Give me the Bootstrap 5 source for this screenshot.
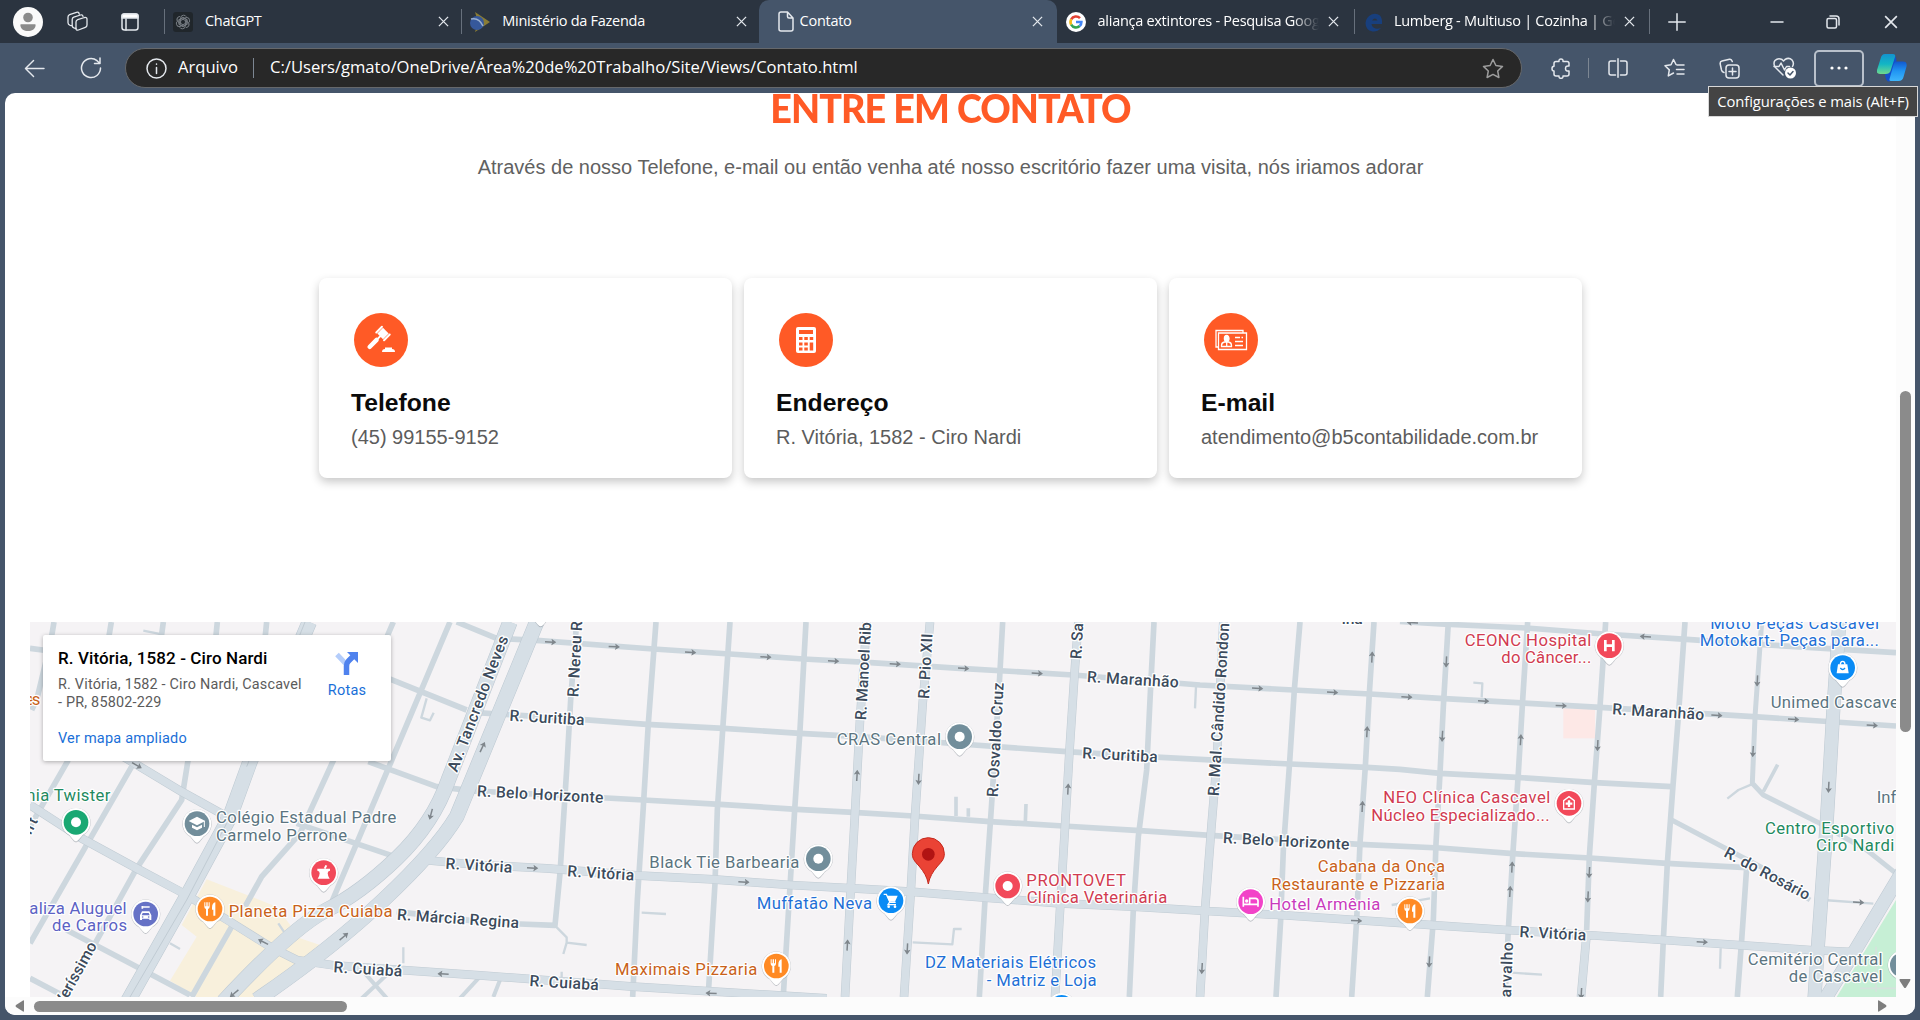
<!DOCTYPE html>
<html lang="pt-BR">
<head>
<meta charset="utf-8">
<title>Contato</title>
<link href="https://cdn.jsdelivr.net/npm/bootstrap@5.3.0/dist/css/bootstrap.min.css" rel="stylesheet">
<style>
body{width:1920px;height:1020px;overflow:hidden;background:#45556a;font-family:"Open Sans",sans-serif;color:#fff}
svg{display:block;flex:none}
.ico{fill:none;stroke:#e4e8ed;stroke-width:1.5;stroke-linecap:round;stroke-linejoin:round}
.tabstrip{height:43px;background:#2b3440;font-size:14.5px;letter-spacing:-.28px}
.lead-slot{width:164px;padding-left:13px}
.btab{width:297.3px;padding:0 12px 0 8px;border-left:1px solid transparent}
.btab.split::before{content:"";width:1px;height:25px;background:#67707c;margin-left:-9px;margin-right:8px}
.btab.on{background:#45556a;border-radius:10px 10px 0 0;width:298px;padding-left:18px}
.tab-title{white-space:nowrap;overflow:hidden;padding-bottom:2px}
.faded{-webkit-mask-image:linear-gradient(90deg,#000 88%,transparent);mask-image:linear-gradient(90deg,#000 88%,transparent)}
.tools{height:50px}
.slot{display:flex;align-items:center;justify-content:center;flex:none;height:100%}
.omni{width:1397px;height:40px;background:#282828;border:1px solid #66686b;border-radius:20px;padding:0 17px 0 20px;font-size:16.6px}
.omni span{padding-bottom:1px}
.vbar{width:1px;height:20px;background:#7d8793;flex:none}
.menu-btn{width:50px;height:37px;border:2px solid #b9c1cb;border-radius:5px}
.tip{top:86px;right:2px;width:210px;height:31px;background:#444;border:1px solid #d8d8d8;font-size:14.8px;letter-spacing:-.11px;z-index:5;line-height:29px}
.viewport{margin-left:5px;width:1910px;height:922px;background:#fff;border-radius:10px;overflow:hidden}
.page{width:1891px;height:904px;font-family:"Liberation Sans",Arial,sans-serif}
.headline{color:#ff5a26;font-family:Lato,sans-serif;font-weight:900;font-size:40px;line-height:30px;letter-spacing:-1px;transform:scaleX(.942)}
.intro{font-size:20px;color:#616161;line-height:30px;margin-top:29px}
.cards{gap:12px;margin-top:96px}
.info{width:413px;height:200px;border-radius:8px;border:0;box-shadow:0 4px 10px rgba(0,0,0,.22);padding:35px 32px}
.info h2{font-size:24.7px;font-weight:700;color:#0b0b0b;line-height:29px;margin:21px 0 0}
.info p{font-size:20px;color:#5c5c5c;line-height:30px;margin:5px 0 0;white-space:nowrap}
.mapbox{margin:144px 0 0 25px;width:1866px;height:375px;font-family:Roboto,sans-serif}
.place{left:13px;top:13px;width:348px;height:126px;background:#fff;border-radius:2px;box-shadow:0 1px 4px rgba(0,0,0,.3);padding:13px 14px 0 15px}
.place h3{font-size:17px;font-weight:500;color:#000;line-height:20px;margin:0;letter-spacing:.1px}
.place .addr{font-size:14.4px;line-height:18px;color:#5b5b5b;margin:8px 0 0;white-space:nowrap;letter-spacing:.2px}
.place a{font-size:14.5px;color:#1a6fd8;text-decoration:none;letter-spacing:.2px}
.go{width:60px;padding-top:2px}
.vtrack{width:19px;height:904px;background:#fcfcfc}
.vthumb{width:11px;height:341px;border-radius:6px;background:#8b8b8b;margin:298px 0 0 4px}
.htrack{height:18px;background:#fcfcfc}
.hthumb{width:313px;height:11px;border-radius:6px;background:#8b8b8b;margin-left:9px}
.st{fill:none;stroke:#cdd7de;stroke-width:17;stroke-linejoin:round}
.mj{fill:none;stroke:#d6dfe6;stroke-width:23;stroke-linejoin:round}
.mjb{fill:none;stroke:#c0cbd3;stroke-width:26;stroke-linejoin:round}
.lbl text{font-family:Roboto,sans-serif;font-size:50px;paint-order:stroke;stroke:#fff;stroke-width:7px;stroke-linejoin:round}
.rd text{font-weight:500;font-size:47px;fill:#3c4b5c;stroke-width:8px}
.gn{fill:#1f8a5f}.gy{fill:#5b7480}.pu{fill:#5c62c4}.og{fill:#c9621a}.bl{fill:#1f70d6}.re{fill:#d13b50}.mg{fill:#c93bbd}
</style>
<script src="https://cdn.jsdelivr.net/npm/bootstrap@5.3.0/dist/js/bootstrap.bundle.min.js"></script>
</head>
<body class="position-relative">
<svg width="0" height="0" class="position-absolute">
  <symbol id="x" viewBox="0 0 12 12"><path d="M1 1l10 10M11 1L1 11" stroke="#e4e8ed" stroke-width="1.4"/></symbol>
  <symbol id="pin" viewBox="-50 -50 100 120" overflow="visible"><path d="M0 60C-6 60-12 50-20 40A44 44 0 1 1 20 40C12 50 6 60 0 60z" fill="#8a9299" opacity=".5"/><path d="M0 57C-6 57-12 47-20 38A43 43 0 1 1 20 38C12 47 6 57 0 57z" fill="#fff"/></symbol>
  <symbol id="ar" viewBox="-18 -10 36 20"><path d="M-16 0H8" stroke="#7f868c" stroke-width="4.500"/><path d="M3-10L18 0L3 10L6 0z" fill="#7f868c"/></symbol>
</svg>

<header>
  <div class="tabstrip d-flex align-items-center">
    <div class="lead-slot d-flex align-items-center flex-shrink-0">
      <svg width="30" height="30" viewBox="0 0 30 30"><circle cx="15" cy="15" r="15" fill="#fafafa"/><circle cx="15" cy="10.500" r="4.800" fill="#8b8b8b"/><path d="M8 17.200h14q.8 0 .6 1.300C22 22.500 19 24 15 24s-7-1.500-7.600-5.500q-.2-1.300.6-1.300z" fill="#8b8b8b"/></svg>
      <svg class="ico" style="margin-left:24px;stroke-width:1.3" width="21" height="21" viewBox="0 0 21 21"><path d="M9 11q0-1.800 1.700-2.400L17.600 6.500Q20 6 20 8.300V14q0 1.800-1.700 2.400L11.400 19Q9 19.800 9 17.500z"/><path d="M9 17.500l-2.200-.6Q5.200 16.300 5.200 14.500V8.500Q5.200 6.800 6.800 6.200L13.500 4Q15.600 3.300 16 5.500M5.200 14.800l-2-.5Q1 13.600 1 11.800V6Q1 4.200 2.600 3.600L9.500 1.300Q11.800.6 12.200 3"/></svg>
      <svg class="ico" style="margin-left:33px" width="18" height="18" viewBox="0 0 18 18"><rect x="1" y="1" width="16" height="16" rx="2.500"/><path d="M1 3q0-2 2-2h12q2 0 2 2v2H1z" fill="#fff"/><path d="M5 6v11"/></svg>
    </div>
    <div class="btab split d-flex align-items-center flex-shrink-0 h-100">
      <svg width="20" height="20" viewBox="0 0 20 20"><rect width="20" height="20" rx="3" fill="#20262b"/><g fill="none" stroke="#767c82" stroke-width="1"><path id="petal" d="M7.600 11.500V6.200Q7.800 3.200 10.600 3.200 12.600 3.300 13.300 4.700M9.800 5.300L13.900 7.700V12"/><use href="#petal" transform="rotate(60 10 10)"/><use href="#petal" transform="rotate(120 10 10)"/><use href="#petal" transform="rotate(180 10 10)"/><use href="#petal" transform="rotate(240 10 10)"/><use href="#petal" transform="rotate(300 10 10)"/></g></svg>
      <span class="tab-title flex-grow-1 ms-2 ps-1">ChatGPT</span><svg width="11" height="11"><use href="#x"/></svg>
    </div>
    <div class="btab split d-flex align-items-center flex-shrink-0 h-100">
      <svg width="20" height="20" viewBox="0 0 20 20"><path d="M5 0l15 10L5 20l3-10z" fill="#8a7c35"/><circle cx="7" cy="11" r="7" fill="#36589b"/><path d="M1 7q8-2 12 7" stroke="#9bb0cf" stroke-width="1.500" fill="none"/></svg>
      <span class="tab-title flex-grow-1 ms-2 ps-1">Ministério da Fazenda</span><svg width="11" height="11"><use href="#x"/></svg>
    </div>
    <div class="btab on d-flex align-items-center flex-shrink-0 h-100">
      <svg class="ico" width="16" height="21" viewBox="0 0 16 21"><path d="M3 1h6.500l5.500 6v11q0 2-2 2H3q-2 0-2-2V3q0-2 2-2zM9.500 1v4.500q0 1.500 1.500 1.500h4"/></svg>
      <span class="tab-title flex-grow-1" style="margin-left:6px">Contato</span><svg width="11" height="11" style="margin-right:2px"><use href="#x"/></svg>
    </div>
    <div class="btab d-flex align-items-center flex-shrink-0 h-100">
      <svg width="20" height="20" viewBox="0 0 20 20"><circle cx="10" cy="10" r="10" fill="#fff"/><g fill="none" stroke-width="2.600"><path d="M14 6.200A5.500 5.500 0 0 0 5.200 7.300" stroke="#e24234"/><path d="M5.200 7.300a5.500 5.500 0 0 0 0 5.400" stroke="#f5b916"/><path d="M5.200 12.700a5.500 5.500 0 0 0 8.500 1.300" stroke="#31a552"/><path d="M13.700 14A5.500 5.500 0 0 0 15.400 10H10" stroke="#4285f4"/></g></svg>
      <span class="tab-title faded" style="margin-left:12px;width:221px">aliança extintores - Pesquisa Google</span><svg class="ms-auto" width="11" height="11" style="margin-right:3px"><use href="#x"/></svg>
    </div>
    <div class="btab split d-flex align-items-center flex-shrink-0 h-100">
      <svg width="20" height="20" viewBox="0 0 20 20"><path d="M17 3.500Q13 .5 8.500 2.500 3 5 2.500 11q0 7 7 8.500 5 .5 8.500-3.500-3 1-5.500.5Q9 15.500 8.500 12H19Q19.500 6.500 17 3.500z" fill="#183f7d"/><path d="M9 8.500q3-4 5.500 0z" fill="#2b3440"/></svg>
      <span class="tab-title faded" style="margin-left:11px;width:221px">Lumberg - Multiuso | Cozinha | Geral</span><svg class="ms-auto" width="11" height="11" style="margin-right:4px"><use href="#x"/></svg>
    </div>
    <span class="vbar" style="height:25px;background:#67707c;margin-left:-2px"></span>
    <div class="slot" style="width:54px"><svg class="ico" width="18" height="18" viewBox="0 0 18 18"><path d="M9 .8v16.400M.8 9h16.400"/></svg></div>
    <div class="slot ms-auto" style="width:56px"><svg class="ico" width="14" height="14" viewBox="0 0 14 14"><path d="M1 7h12"/></svg></div>
    <div class="slot" style="width:56px"><svg class="ico" width="14" height="14" viewBox="0 0 14 14"><rect x="1" y="3.500" width="9.500" height="9.500" rx="1.500"/><path d="M4 1h6q3 0 3 3v6"/></svg></div>
    <div class="slot" style="width:59px"><svg width="14" height="14"><use href="#x"/></svg></div>
  </div>

  <div class="tools d-flex align-items-center">
    <div class="slot" style="width:69px"><svg class="ico" width="21" height="19" viewBox="0 0 22 20"><path d="M21 10H1.500M10 1.500L1.500 10l8.500 8.500"/></svg></div>
    <div class="slot" style="width:43px"><svg class="ico" width="22" height="22" viewBox="0 0 22 22"><path d="M20.500 11A9.500 9.500 0 1 1 17 3.700L20 6.500M20 1v5.500h-5.500"/></svg></div>
    <div class="omni d-flex align-items-center flex-shrink-0" style="margin-left:13px">
      <svg class="ico" width="21" height="21" viewBox="0 0 21 21"><circle cx="10.500" cy="10.500" r="9.500"/><path d="M10.500 9.500v6M10.500 6v.3"/></svg>
      <span style="margin-left:11px;width:75px">Arquivo</span><span class="vbar"></span>
      <span class="flex-grow-1" style="margin-left:16px">C:/Users/gmato/OneDrive/Área%20de%20Trabalho/Site/Views/Contato.html</span>
      <svg class="ico" style="stroke:#9c9c9c" width="22" height="21" viewBox="0 0 22 21"><path d="M11 1.500l2.900 6 6.600.9-4.800 4.600 1.200 6.500-5.900-3.100-5.900 3.100 1.200-6.500L1.500 8.400l6.600-.9z"/></svg>
    </div>
    <div class="slot" style="width:56px;margin-left:10px"><svg class="ico" width="19" height="21" viewBox="0 0 19 21"><path d="M5 3.500h3q-.3-2.500 2-2.500t2 2.500h4q2 0 2 2V8q-3.500-.5-3.500 2.500t3.500 2.500v3q0 2-2 2h-4q.2 2.300-2 2.300T8 18H5q-2 0-2-2v-3Q1 13 1 10.700T3 8.300V5.500q0-2 2-2z"/></svg></div>
    <span class="vbar"></span>
    <div class="slot" style="width:58px"><svg class="ico" width="20" height="20" viewBox="0 0 20 20"><path d="M7.500 3H3Q1 3 1 5v10q0 2 2 2h4.500M12.500 3H17q2 0 2 2v10q0 2-2 2h-4.500M10 .8v18.400"/></svg></div>
    <div class="slot" style="width:55px"><svg class="ico" width="21" height="20" viewBox="0 0 21 20"><path d="M12 6.500L9.500 1.500 7 6.800l-6 .9 4.300 4.200-1 6L9.500 15M13 7h7M12.500 11.500H20M13 16h7"/></svg></div>
    <div class="slot" style="width:54px"><svg class="ico" width="21" height="21" viewBox="0 0 21 21"><rect x="7" y="7" width="13" height="13" rx="3"/><path d="M13.500 10v7M10 13.500h7M5 14.500q-2-.5-2.500-2.500L1.200 6Q.8 3.500 3 3l7.500-1.800q2-.4 2.800 2.300"/></svg></div>
    <div class="slot" style="width:58px"><svg class="ico" width="24" height="22" viewBox="0 0 24 22"><path d="M10 18L2 10Q0 6 2 3.500 5 .5 9 2.500l1.500 1.500L12 2.500Q16 0 19 3q2.500 3 .5 6.500"/><path d="M1 9.500h5L8 6l3.500 7 2-3.500h3"/><circle cx="17.500" cy="16" r="5.500" fill="#fff" stroke="none"/><path d="M15 16l2 2 3-3.500" stroke="#45556a"/></svg></div>
    <div class="slot menu-btn"><svg width="18" height="4" viewBox="0 0 18 4" fill="#fff"><circle cx="2" cy="2" r="1.600"/><circle cx="9" cy="2" r="1.600"/><circle cx="16" cy="2" r="1.600"/></svg></div>
    <div class="slot" style="width:56px"><svg width="30" height="28" viewBox="0 0 30 28"><defs><linearGradient id="c1" x2="0" y2="1"><stop stop-color="#1393cf"/><stop offset=".5" stop-color="#12b6c4"/><stop offset="1" stop-color="#6fd98d"/></linearGradient><linearGradient id="c2" x2="0" y2="1"><stop stop-color="#1158cf"/><stop offset=".5" stop-color="#2196f3"/><stop offset="1" stop-color="#3fb6fb"/></linearGradient></defs><path d="M16 1q3 0 3.500 6L15 24q-1 4-3.500 3.500T8 21L13 7q1-6 3-6z" fill="#1450cb"/><path d="M8 0h8q3 0 2 3l-4.500 14q-1 3-5 3H3q-4 0-3-4L3.500 5Q4.500 0 8 0z" fill="url(#c1)"/><path d="M20 7.500h6q4.500 0 3.500 5l-3 10.500q-1 4-5 4h-7.500q-2 0-1.500-2l4-14q1-3.500 3.500-3.500z" fill="url(#c2)"/></svg></div>
  </div>
</header>
<div class="tip position-absolute text-center text-nowrap">Configurações e mais (Alt+F)</div>

<main class="viewport">
  <div class="d-flex">
    <div class="page">
      <h1 class="headline text-center mb-0">ENTRE EM CONTATO</h1>
      <p class="intro text-center mb-0">Através de nosso Telefone, e-mail ou então venha até nosso escritório fazer uma visita, nós iriamos adorar</p>
      <div class="cards d-flex justify-content-center">
        <div class="card info">
          <svg width="60" height="54" viewBox="-30 -27 60 54"><circle r="27" fill="#ff5a26"/><g fill="#fff"><g transform="translate(2,-6.500) rotate(45)"><rect x="-4" y="-4" width="8" height="8"/><rect x="-6.500" y="-5" width="2" height="10" rx="1"/><rect x="4.500" y="-5" width="2" height="10" rx="1"/><rect x="-1" y="3" width="2" height="5"/><rect x="-2.200" y="7" width="4.400" height="14" rx="2"/></g><path d="M1 12q0-3 3-3V7.500h7V9q3 0 3 3z"/></g></svg>
          <h2>Telefone</h2><p>(45) 99155-9152</p>
        </div>
        <div class="card info">
          <svg width="60" height="54" viewBox="-30 -27 60 54"><circle r="27" fill="#ff5a26"/><rect x="-10" y="-13" width="20" height="26" rx="2" fill="#fff"/><g fill="#ff5a26"><path d="M-7-10H7v4H-7zM-7-3h3.500v3H-7zM-1.700-3h3.500v3h-3.500zM3.700-3h3.500v3H3.700zM-7 2.500h3.500v3H-7zM-1.700 2.500h3.500v3h-3.500zM3.700 2.500h3.500v8H3.700zM-7 7.500h3.500v3H-7zM-1.700 7.500h3.500v3h-3.500z"/></g></svg>
          <h2>Endereço</h2><p>R. Vitória, 1582 - Ciro Nardi</p>
        </div>
        <div class="card info">
          <svg width="60" height="54" viewBox="-30 -27 60 54"><circle r="27" fill="#ff5a26"/><g fill="none" stroke="#fff" stroke-width="1.300"><path d="M-12.500 7H-15V-9.500h27V-7M-12.500-7h28V9.500h-28zM4-2.500h5M10.500-2.500h1.500M4 1.500h8M4 5.500h8M-9.500 6.500v-1q0-3 3-3.500h4q3 .5 3 3.500v1z"/><ellipse cx="-4.300" cy="-1.600" rx="2.300" ry="3" fill="#fff"/><path d="M-4.300 2v4"/></g></svg>
          <h2>E-mail</h2><p>atendimento@b5contabilidade.com.br</p>
        </div>
      </div>

      <section class="mapbox position-relative">
        <svg width="1866" height="375" viewBox="90 36 5598 1125">
          <rect x="90" y="36" width="5598" height="1125" fill="#f5f3f5"/>
          <path d="M620 808L830 890L900 985L960 1005L1000 1000L760 1161H590L510 1112L590 980L545 945z" fill="#f8f0dc"/>
          <path d="M5688 870L5510 1161H5688z" fill="#c6efd5"/>
          <path d="M5580 1135h108M5628 1010v135" stroke="#d5e2dd" stroke-width="5"/>
          <rect x="4690" y="295" width="95" height="90" fill="#fde8e6"/>
          <g class="st">
            <path d="M162 36l-10 60L110 270L95 300M90 115l60 8M334 36l-10 60M490 36l-8 60M652 36l-6 60M800 36l-6 60M1180 36l-30 70M90 650L205 450M395 470L90 1000M565 445L545 570L410 775L280 1010L180 1170M1003 445L900 670L785 800L735 890M1350 36L1165 475L1070 700L985 900M1105 455L1310 530L1440 545M1165 205L1400 300M890 640L1200 745M200 960L410 1070L570 1155M90 1105L180 1152M695 950L575 1161"/>
            <path d="M1370 36L1490 85L1620 92L1960 117L2190 132L2410 147L2600 157L2880 175L3220 195L3600 225L3880 240L4110 252L4320 265L4800 292L5260 320L5688 348"/>
            <path d="M1430 308L1700 325L1940 343L2170 355L2400 370L2580 380L2880 402L3200 425L3440 440L3870 462L4100 472L4200 478L4320 490L4550 502L4785 518L5015 530"/>
            <path d="M1430 543L1930 570L2160 583L2390 598L2560 607L2740 618L2970 635L3190 648L3420 662L3630 676L4080 703L4320 714L4540 731L4770 744L5000 760L5240 773L5225 990L5212 1161"/>
            <path d="M4200 34L4320 42L4580 54L4810 72L5060 88L5290 104L5688 128"/>
            <path d="M1190 905L1440 935L1560 942L1665 946L1680 790L1700 480L1712 270L1730 36"/>
            <path d="M1968 36L1945 340L1930 590L1912 870L1898 1161M2190 36L2168 360L2152 600L2145 820L2125 1150M2418 36L2400 360L2384 600L2370 830L2350 1155M3008 36L2998 220L2975 580L2955 870L2938 1161M3462 36L3450 270L3440 480L3415 680L3400 900L3388 1161M3900 36L3883 240L3868 470L3850 720L3842 930L3828 1161M4122 36L4108 250L4096 470L4080 700L4070 930L4055 1161M4345 36L4330 290L4320 490L4308 700L4300 930L4282 1161M4583 36L4568 270L4555 490L4538 740L4525 960L4515 1161M4817 36L4800 290L4783 520L4768 740L4760 960M5055 36L5035 320L5018 540L5002 760L4990 990L4982 1161"/>
            <path style="stroke-width:15" d="M5285 36L5265 320L5257 520L5290 555L5450 635L5600 720L5688 790M5015 630L5300 780L5430 870"/>
            <path style="stroke-width:12" d="M1500 1110L1480 1161M1095 1090L1165 1170M1165 1090L1080 1170M1440 1100L1380 1165"/>
          </g>
          <g class="st">
            <path style="stroke-width:7" d="M430 62L490 74M1280 265L1264 323L1290 331L1301 308M510 1000L540 1017M835 940L855 970L880 982M1210 1012V1060M1668 950L1700 982V998L1690 1032M1700 998L1760 1005M1685 1085v20M1925 908L1998 912M2738 997L2857 1003L2862 957H2885M4420 218L4447 220L4445 262M3588 230L3585 295M5162 1015L5160 1076M4535 1088L4626 1094M4175 885L4290 865M5470 870L5620 881M5182 566L5215 540L5255 523"/>
            <path style="stroke-width:11" d="M2868 560V618M2905 595V620M3078 582L3076 635M5290 545L5333 464"/>
          </g>
          <g>
            <g class="mjb"><path d="M90 585L245 685L410 775L560 855L690 935L810 1010L890 1050L1000 1066L1440 1096L1900 1130L2480 1165M370 440L545 545L690 625M1270 750L1440 765L1640 775L1920 797L2140 808L2370 825L2560 835L2730 845L2880 857L3180 880L3400 890L3620 903L3840 915L4320 947L4520 960L4760 975L4990 990L5430 1020L5560 1026M2600 36L2580 330L2565 610L2552 840L2535 1161M2790 36L2768 280L2745 620L2732 850L2712 1161M3235 36L3225 170L3208 430L3195 650L3180 900L3165 1161M3670 36L3650 460L3635 640L3615 900L3600 1161M4760 970L4743 1161"/></g>
            <g fill="none" stroke="#bcc8d1" stroke-width="46"><path d="M928 36L750 455L690 620L560 860L380 1180"/><path d="M1530 36L1345 510Q1300 640 1190 745T980 900T670 1175"/><path d="M1610 36L1440 450L1370 620Q1310 720 1150 870T770 1170"/><path stroke-width="42" d="M5518 36L5500 300L5480 640L5453 1020L5443 1170"/><path stroke-width="42" d="M5710 780L5560 1030L5470 1175"/></g>
            <g class="mj"><path d="M90 585L245 685L410 775L560 855L690 935L810 1010L890 1050L1000 1066L1440 1096L1900 1130L2480 1165M370 440L545 545L690 625M1270 750L1440 765L1640 775L1920 797L2140 808L2370 825L2560 835L2730 845L2880 857L3180 880L3400 890L3620 903L3840 915L4320 947L4520 960L4760 975L4990 990L5430 1020L5560 1026M2600 36L2580 330L2565 610L2552 840L2535 1161M2790 36L2768 280L2745 620L2732 850L2712 1161M3235 36L3225 170L3208 430L3195 650L3180 900L3165 1161M3670 36L3650 460L3635 640L3615 900L3600 1161M4760 970L4743 1161"/></g>
            <g fill="none" stroke="#d6dfe6" stroke-width="43"><path d="M928 36L750 455L690 620L560 860L380 1180"/><path d="M1530 36L1345 510Q1300 640 1190 745T980 900T670 1175"/><path d="M1610 36L1440 450L1370 620Q1310 720 1150 870T770 1170"/><path stroke-width="39" d="M5518 36L5500 300L5480 640L5453 1020L5443 1170"/><path stroke-width="39" d="M5710 780L5560 1030L5470 1175"/></g>
            <path d="M915 36L740 470M680 640L560 870L390 1161" fill="none" stroke="#c0cbd3" stroke-width="3"/>
          </g>
          <g id="arrows"></g>
          <g class="lbl rd">
            <text transform="translate(1371,488) rotate(-69)" textLength="432">Av. Tancredo Neves</text>
            <text transform="translate(1735,262) rotate(-87)" textLength="228">R. Nereu R</text>
            <text transform="translate(1528,332) rotate(3.500)" textLength="225">R. Curitiba</text>
            <text transform="translate(1430,559) rotate(3)" textLength="380">R. Belo Horizonte</text>
            <text transform="translate(1336,776) rotate(3.500)" textLength="200">R. Vitória</text>
            <text transform="translate(1701,799) rotate(3.500)" textLength="201">R. Vitória</text>
            <text transform="translate(1190,929) rotate(4)" textLength="367">R. Márcia Regina</text>
            <text transform="translate(1000,1087) rotate(3.500)" textLength="206">R. Cuiabá</text>
            <text transform="translate(1588,1128) rotate(3.500)" textLength="208">R. Cuiabá</text>
            <text transform="translate(2598,331) rotate(-87)" textLength="294">R. Manoel Rib</text>
            <text transform="translate(2787,267) rotate(-87)" textLength="196">R. Pio XII</text>
            <text transform="translate(2993,562) rotate(-87)" textLength="344">R. Osvaldo Cruz</text>
            <text transform="translate(3244,148) rotate(-87)" textLength="108">R. Sa</text>
            <text transform="translate(3656,559) rotate(-86.500)" textLength="520">R. Mal. Cândido Rondon</text>
            <text transform="translate(3260,216) rotate(3.500)" textLength="276">R. Maranhão</text>
            <text transform="translate(3246,445) rotate(3)" textLength="227">R. Curitiba</text>
            <text transform="translate(3668,699) rotate(3)" textLength="380">R. Belo Horizonte</text>
            <text transform="translate(4836,313) rotate(3.500)" textLength="276">R. Maranhão</text>
            <text transform="translate(4558,981) rotate(3)" textLength="200">R. Vitória</text>
            <text transform="translate(5169,738) rotate(28)" textLength="284">R. do Rosário</text>
            <text transform="translate(4532,1195) rotate(-88)" textLength="198">Carvalho</text>
            <text transform="translate(189,1193) rotate(-61)" textLength="213">Veríssimo</text>
            <text transform="translate(92,676) rotate(-63)" textLength="50">nt</text>
            <text x="4025" y="41">ina</text>
          </g>
          <g class="lbl">
            <g class="og"><text x="75" y="286" textLength="46">es</text><text x="686" y="922" textLength="492">Planeta Pizza Cuiaba</text><text x="1845" y="1094" textLength="427">Maximais Pizzaria</text><text x="3953" y="787" textLength="382">Cabana da Onça</text><text x="3814" y="839" textLength="521">Restaurante e Pizzaria</text></g>
            <g class="gn"><text x="79" y="572" textLength="252">nia Twister</text><text x="5295" y="671" textLength="388">Centro Esportivo</text><text x="5448" y="723" textLength="235">Ciro Nardi</text></g>
            <g class="gy"><text x="648" y="640" textLength="541">Colégio Estadual Padre</text><text x="648" y="692" textLength="393">Carmelo Perrone</text><text x="2510" y="404" textLength="313">CRAS Central</text><text x="1948" y="773" textLength="450">Black Tie Barbearia</text><text x="5312" y="293" textLength="398">Unimed Cascavel</text><text x="5630" y="579">Inf</text><text x="5243" y="1064" textLength="405">Cemitério Central</text><text x="5366" y="1116" textLength="282">de Cascavel</text></g>
            <g class="pu"><text x="88" y="912" textLength="292">aliza Aluguel</text><text x="156" y="964" textLength="225">de Carros</text></g>
            <g class="bl"><text x="2270" y="898" textLength="346">Muffatão Neva</text><text x="2775" y="1075" textLength="513">DZ Materiais Elétricos</text><text x="2960" y="1128" textLength="330">- Matriz e Loja</text><text x="5131" y="56" textLength="506">Moto Peças Cascavel</text><text x="5099" y="108" textLength="538">Motokart- Peças para...</text></g>
            <g class="re"><text x="3079" y="827" textLength="299">PRONTOVET</text><text x="3080" y="880" textLength="422">Clínica Veterinária</text><text x="4150" y="579" textLength="501">NEO Clínica Cascavel</text><text x="4114" y="632" textLength="535">Núcleo Especializado...</text><text x="4394" y="108" textLength="380">CEONC Hospital</text><text x="4504" y="160" textLength="270">do Câncer...</text></g>
            <g class="mg"><text x="3808" y="900" textLength="333">Hotel Armênia</text></g>
          </g>
          <g id="pins"></g>
          <path d="M2785 822C2781 800 2772 786 2757 768C2742 752 2737 745 2737 731A48 48 0 0 1 2833 731C2833 745 2828 752 2813 768C2798 786 2789 800 2785 822z" fill="#ea4335" stroke="#c5281c" stroke-width="3"/><circle cx="2785" cy="733" r="19" fill="#b11313"/>
        </svg>
        <div class="place position-absolute d-flex justify-content-between">
          <div>
            <h3>R. Vitória, 1582 - Ciro Nardi</h3>
            <p class="addr">R. Vitória, 1582 - Ciro Nardi, Cascavel<br>- PR, 85802-229</p>
            <a class="d-block" style="margin-top:16px" href="#">Ver mapa ampliado</a>
          </div>
          <div class="go d-flex flex-column align-items-center">
            <svg width="24" height="26" viewBox="0 0 24 26"><path d="M11 14L2 4.500" stroke="#b4cdfb" stroke-width="5"/><path d="M11.500 25V16q0-3 2-5l5-5" stroke="#4f82ee" stroke-width="5.500" fill="none"/><path d="M12 2h11v11z" fill="#4f82ee"/></svg>
            <a href="#" style="margin-top:4px">Rotas</a>
          </div>
        </div>
      </section>
    </div>
    <div class="vtrack d-flex flex-column">
      <div class="vthumb"></div>
      <svg class="mt-auto" style="margin:0 0 8px 3px" width="12" height="11" viewBox="0 0 12 11"><path d="M1 1h10q1 0 0 2L7 9.500q-1 1-2 0L.8 3Q0 1 1 1z" fill="#7e7e7e"/></svg>
    </div>
  </div>
  <div class="htrack d-flex align-items-center">
    <svg style="margin-left:10px" width="10" height="12" viewBox="0 0 10 12"><path d="M9 1v10q0 1-1 .5L1 7Q0 6 1 5l7-4.500Q9 0 9 1z" fill="#7e7e7e"/></svg>
    <div class="hthumb"></div>
    <svg class="ms-auto" style="margin-right:28px" width="10" height="12" viewBox="0 0 10 12"><path d="M1 1v10q0 1 1 .5L9 7q1-1 0-2L2 .5Q1 0 1 1z" fill="#7e7e7e"/></svg>
  </div>
</main>

<script>
// One-way street arrows: [x, y, angle]
const R=3,arrows=[[1651,96,R],[1842,110,R],[2071,127,R],[2297,141,R],[2500,153,R],[2685,162,R],[2890,175,R],[3111,190,R],[3772,235,R],[3997,247,R],[4220,261,R],[4450,273,R],[4683,287,R],[5150,316,R],[5380,328,R],[5616,346,R],[1597,774,R],[2231,816,R],[4069,932,R],[5106,996,R],[5575,877,R],
[4937,80,183],[1330,1092,183],[2134,1150,183],[4238,38,183],
[2571,497,-87],[2542,1006,-87],[3204,538,-87],[4116,142,-87],[4101,366,-87],[4087,590,-87],[4562,390,-87],[4536,772,-87],[4530,845,-87],
[2756,507,93],[2722,1016,93],[3606,1075,93],[4288,1055,93],[4339,155,93],[4327,378,93],[4793,406,93],[4768,787,93],[4764,860,93],[4744,1150,93],[5272,212,93],[5259,424,93],[5486,531,93],
[410,466,30],[1293,612,105],[790,996,207],[1031,980,-40],[703,1150,140],[1447,412,-65]];
document.getElementById('arrows').innerHTML=arrows.map(([x,y,a])=>`<use href="#ar" x="-18" y="-10" width="36" height="20" transform="translate(${x},${y}) rotate(${a})"/>`).join('');

// Place pins: [x, y, colour, glyph]
const glyph={
 dot:'<circle r="15" fill="#fff"/>',
 food:'<path d="M-17-20v13q0 6 5 7v20h6V0q5-1 5-7v-13h-3v12h-3v-12h-4v12h-3v-12zM16-20q-10 2-10 16v6h4v18h6z" fill="#fff"/>',
 cart:'<path d="M-22-19h8l11 24h17" fill="none" stroke="#fff" stroke-width="4"/><path d="M-13-15h33L12 3H-5z" fill="#fff"/><path d="M-4 4l-5 8h24" fill="none" stroke="#fff" stroke-width="4"/><circle cx="-7" cy="18" r="4" fill="#fff"/><circle cx="12" cy="18" r="4" fill="#fff"/>',
 bag:'<path d="M-18 17l4-27h28l4 27z" fill="#fff"/><path d="M-7-9q0-10 7-10t7 10" fill="none" stroke="#fff" stroke-width="4"/><path d="M-7 1q7 9 14 0" fill="none" stroke="#0a8bf5" stroke-width="4"/>',
 bed:'<path d="M-22-15v30M22 15V-2q0-8-8-8H-3V7M-22 8h44" fill="none" stroke="#fff" stroke-width="5"/><circle cx="-12" cy="-2" r="5" fill="#fff"/>',
 hosp:'<path d="M-12-17v34M12-17v34M-12 0h24" fill="none" stroke="#fff" stroke-width="8"/>',
 clinic:'<path d="M-16 17V-8L0-20 16-8v25z" fill="none" stroke="#fff" stroke-width="4"/><path d="M0-9v20M-10 1h20" stroke="#fff" stroke-width="7"/>',
 school:'<path d="M-25-8L0-21l25 13L0 5z" fill="#fff"/><path d="M-15 3V12L0 20l15-8V3L0 11z" fill="#fff"/><path d="M22-8v18" stroke="#fff" stroke-width="3"/>',
 drug:'<path d="M-19-12h38v6q-7 1-7 8t6 16h-36q6-9 6-16t-7-8z" fill="#fff"/><path d="M3-12L8-22" stroke="#fff" stroke-width="6"/>',
 car:'<path d="M-10-21h22M-10-24v8" stroke="#fff" stroke-width="5"/><path d="M-17 18V4l6-12h22l6 12v14h-6v-4h-22v4z" fill="#fff"/><path d="M-9-3H9l3 7h-24z" fill="#6672c6"/><circle cx="-9" cy="9" r="2.500" fill="#6672c6"/><circle cx="9" cy="9" r="2.500" fill="#6672c6"/>',
 none:''};
const pins=[[228,637,'#1aa873','dot'],[591,641,'#728e9b','school'],[971,788,'#f2495a','drug'],[630,897,'#ff8a24','food'],[437,912,'#6672c6','car'],[2879,380,'#728e9b','dot'],[2455,746,'#728e9b','dot'],[2673,872,'#0a8bf5','cart'],[2329,1068,'#ff8a24','food'],[3023,828,'#f2495a','dot'],[3752,875,'#f243c8','bed'],[4230,903,'#ff8a24','food'],[4828,107,'#f2495a','hosp'],[4707,580,'#f2495a','clinic'],[5528,173,'#0a8bf5','bag'],[5707,1065,'#728e9b','none'],[3185,1192,'#0a8bf5','none'],[1622,-8,'#728e9b','none']];
document.getElementById('pins').innerHTML=pins.map(([x,y,c,g])=>`<g transform="translate(${x},${y})"><use href="#pin" x="-50" y="-50" width="100" height="120"/><circle r="37" fill="${c}"/>${glyph[g]}</g>`).join('');
</script>
</body>
</html>
